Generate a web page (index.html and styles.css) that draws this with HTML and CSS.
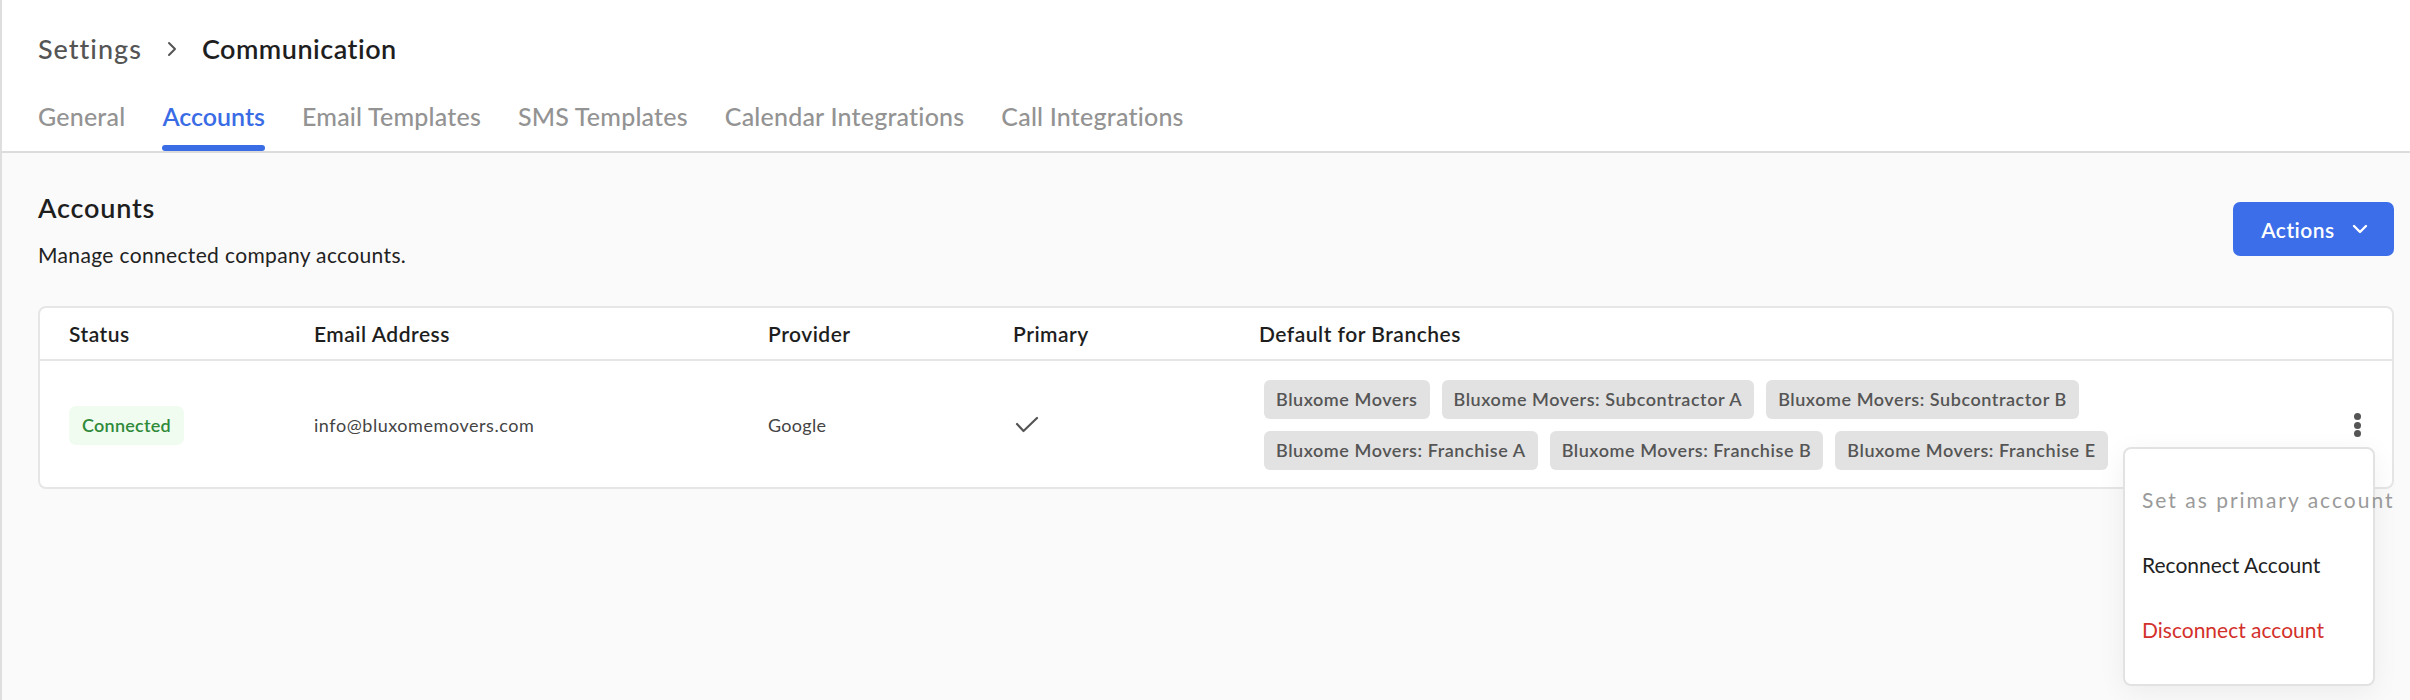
FILE: index.html
```html
<!DOCTYPE html>
<html lang="en">
<head>
<meta charset="utf-8">
<title>Settings - Communication</title>
<link rel="stylesheet" href="styles.css">
</head>
<body>
<div class="page">
  <header class="top">
    <nav class="crumbs">
      <span class="crumb">Settings</span>
      <svg class="crumb-sep" width="12" height="18" viewBox="0 0 12 18"><polyline points="3,3 9,9 3,15" fill="none" stroke="#555" stroke-width="2" stroke-linecap="round" stroke-linejoin="round"/></svg>
      <span class="crumb current">Communication</span>
    </nav>
    <nav class="tabs">
      <a class="tab">General</a>
      <a class="tab active">Accounts</a>
      <a class="tab">Email Templates</a>
      <a class="tab">SMS Templates</a>
      <a class="tab">Calendar Integrations</a>
      <a class="tab">Call Integrations</a>
    </nav>
  </header>
  <main class="content">
    <div class="section-head">
      <div class="section-title">
        <h1>Accounts</h1>
        <p>Manage connected company accounts.</p>
      </div>
      <button class="btn-actions">Actions
        <svg width="16" height="10" viewBox="0 0 16 10"><polyline points="2,2 8,8 14,2" fill="none" stroke="#fff" stroke-width="2.4" stroke-linecap="round" stroke-linejoin="round"/></svg>
      </button>
    </div>
    <div class="card">
      <div class="grid head">
        <div>Status</div>
        <div>Email Address</div>
        <div>Provider</div>
        <div>Primary</div>
        <div>Default for Branches</div>
        <div></div>
      </div>
      <div class="grid body">
        <div><span class="badge">Connected</span></div>
        <div class="cell email">info@bluxomemovers.com</div>
        <div class="cell">Google</div>
        <div class="cell">
          <svg class="check" width="24" height="18" viewBox="0 0 24 18"><polyline points="2,8 8.5,15 22,2" fill="none" stroke="#555" stroke-width="2.2" stroke-linecap="round" stroke-linejoin="round"/></svg>
        </div>
        <div class="chips">
          <span class="chip">Bluxome Movers</span>
          <span class="chip">Bluxome Movers: Subcontractor A</span>
          <span class="chip">Bluxome Movers: Subcontractor B</span>
          <span class="chip">Bluxome Movers: Franchise A</span>
          <span class="chip">Bluxome Movers: Franchise B</span>
          <span class="chip">Bluxome Movers: Franchise E</span>
        </div>
        <div class="more">
          <span class="kebab"><i></i><i></i><i></i></span>
          <div class="menu">
            <div class="menu-item disabled">Set as primary account</div>
            <div class="menu-item">Reconnect Account</div>
            <div class="menu-item danger">Disconnect account</div>
          </div>
        </div>
      </div>
    </div>
  </main>
</div>
</body>
</html>
```
FILE: styles.css
```css
* { box-sizing: border-box; }
html, body { margin: 0; padding: 0; }
body {
  font-family: Lato, "Open Sans", "Liberation Sans", sans-serif;
  background: #fafafa;
  color: #222;
  height: 700px;
}
.page {
  border-left: 2px solid #dedede;
  min-height: 700px;
}
.top {
  background: #fff;
  padding: 31px 16px 0 36px;
  border-bottom: 2px solid #dcdcdc;
}
.crumbs {
  display: flex;
  align-items: center;
  height: 36px;
}
.crumb {
  font-size: 27px;
  color: #555;
  font-weight: 500;
  line-height: 36px;
  letter-spacing: 1px;
}
.crumb.current {
  color: #1e1e1e;
  font-weight: 600;
  letter-spacing: 0.5px;
}
.crumb-sep { margin: 0 24px 0 24px; }
.tabs {
  display: flex;
  gap: 37px;
  margin-top: 34px;
}
.tab {
  position: relative;
  font-size: 25px;
  line-height: 30px;
  padding-bottom: 20px;
  color: #939393;
  font-weight: 500;
  letter-spacing: 0.2px;
}
.tab.active {
  color: #3a6ce6;
  font-weight: 600;
  letter-spacing: 0;
}
.tab.active::after {
  content: "";
  position: absolute;
  left: 0;
  right: 0;
  bottom: 0;
  height: 6px;
  border-radius: 3px;
  background: #3a6ce6;
}
.content {
  padding: 39px 16px 0 36px;
}
.section-head {
  display: flex;
  justify-content: space-between;
  align-items: flex-start;
}
.section-title h1 {
  margin: 0;
  font-size: 27px;
  line-height: 32px;
  font-weight: 600;
  color: #1e1e1e;
  letter-spacing: 0.8px;
}
.section-title p {
  margin: 17px 0 0;
  font-size: 21px;
  line-height: 28px;
  color: #222;
  letter-spacing: 0.35px;
}
.btn-actions {
  margin-top: 10px;
  width: 161px;
  height: 54px;
  border: none;
  border-radius: 7px;
  background: #3b6ee8;
  color: #fff;
  font-family: inherit;
  font-size: 21px;
  font-weight: 600;
  letter-spacing: 0.5px;
  display: flex;
  align-items: center;
  justify-content: center;
  gap: 17px;
  padding: 0 0 0 2px;
}
.card {
  margin-top: 37px;
  background: #fff;
  border: 2px solid #e6e6e6;
  border-radius: 8px;
}
.grid {
  display: grid;
  grid-template-columns: 245px 454px 245px 246px 1fr 40px;
  padding: 0 30px 0 29px;
  align-items: center;
}
.grid.head {
  height: 53px;
  border-bottom: 2px solid #e6e6e6;
  font-size: 21px;
  font-weight: 600;
  color: #1e1e1e;
  letter-spacing: 0.5px;
}
.grid.body {
  padding-top: 19px;
  padding-bottom: 17px;
  font-size: 18px;
  color: #444;
}
.cell { letter-spacing: 0.3px; }
.cell.email { letter-spacing: 0.55px; }
.badge {
  display: inline-block;
  height: 39px;
  line-height: 39px;
  padding: 0 13px;
  border-radius: 7px;
  background: #effcef;
  color: #2f8a3a;
  font-weight: 600;
  font-size: 18px;
  letter-spacing: 0.25px;
}
.check { display: block; margin-left: 2px; }
.chips {
  display: flex;
  flex-wrap: wrap;
  gap: 12px;
  max-width: 960px;
  padding-left: 5px;
}
.chip {
  height: 39px;
  line-height: 39px;
  padding: 0 12px;
  border-radius: 6px;
  background: #e2e2e2;
  color: #555;
  font-size: 18px;
  font-weight: 600;
  letter-spacing: 0.55px;
}
.more {
  position: relative;
  display: flex;
  justify-content: flex-end;
}
.kebab {
  display: flex;
  flex-direction: column;
  gap: 1.5px;
  width: 8px;
}
.kebab i {
  display: block;
  width: 7px;
  height: 7px;
  border-radius: 50%;
  background: #555;
}
.menu {
  position: absolute;
  top: calc(100% + 10px);
  right: -13px;
  width: 252px;
  padding: 18px 0 22px;
  background: #fff;
  border: 2px solid #e2e2e2;
  border-radius: 8px;
  box-shadow: 0 6px 28px rgba(0, 0, 0, 0.06);
  z-index: 2;
}
.menu-item {
  height: 65px;
  line-height: 65px;
  padding-left: 17px;
  font-size: 21px;
  color: #222;
  white-space: nowrap;
}
.menu-item.disabled { color: #9a9a9a; letter-spacing: 2px; }
.menu-item.danger { color: #d3302b; }
```
